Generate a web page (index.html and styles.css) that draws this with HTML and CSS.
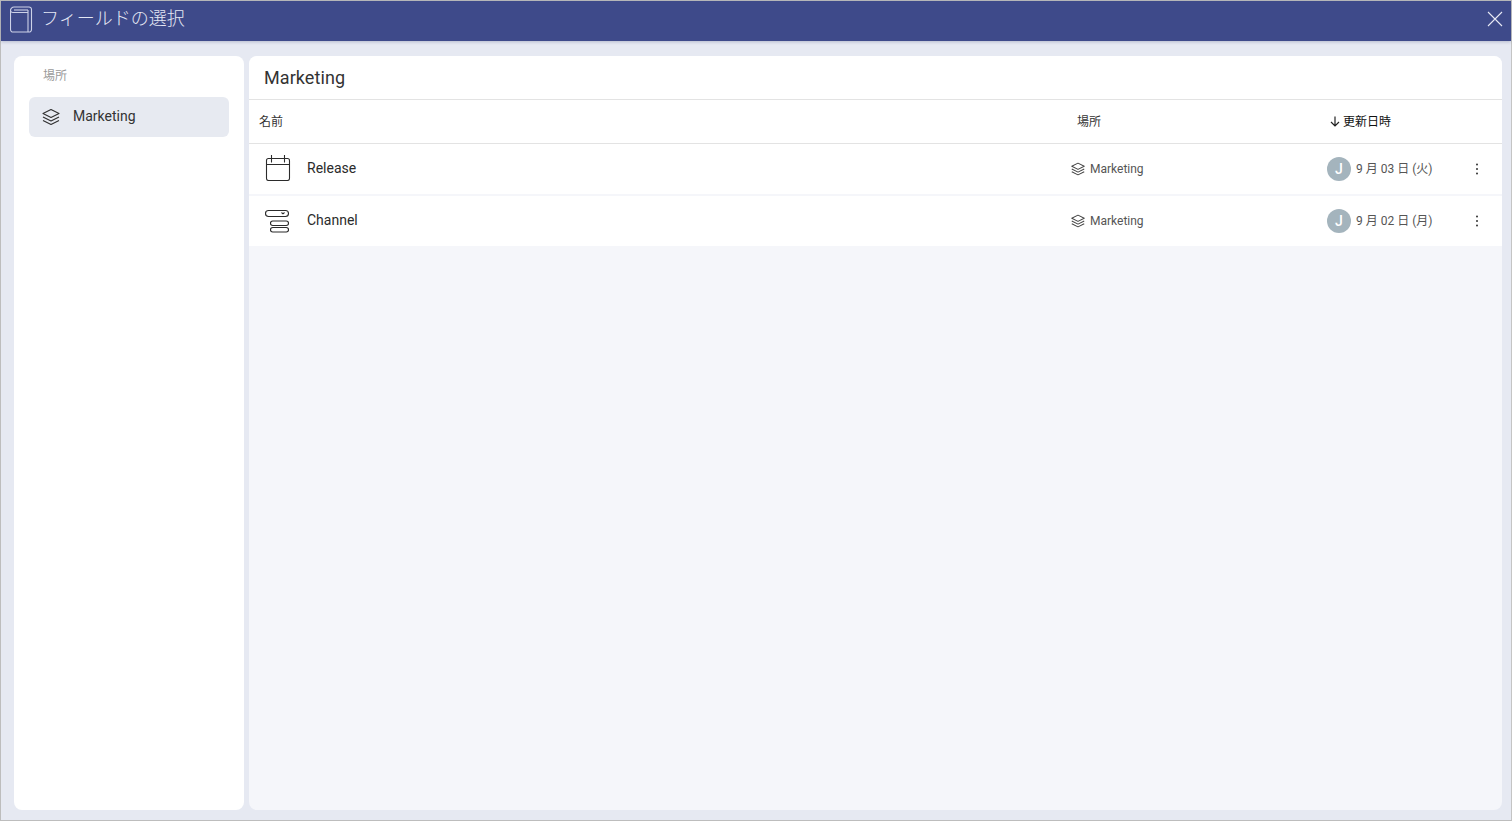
FILE: index.html
```html
<!DOCTYPE html>
<html lang="ja">
<head>
<meta charset="utf-8">
<title>フィールドの選択</title>
<link rel="stylesheet" href="styles.css">
</head>
<body>
<div class="dialog">
  <header class="titlebar">
    <svg class="book" width="23" height="27" viewBox="0 0 23 27" fill="none" stroke="#cdd2e8" stroke-width="1.1">
      <path d="M4 1h15a2.500 2.500 0 0 1 2.500 2.500v20a2.500 2.500 0 0 1-2.500 2.500H3a2.500 2.500 0 0 1-2.500-2.500V4.500A3.500 3.500 0 0 1 4 1z"/>
      <path d="M0.500 4.500A2.500 2.500 0 0 0 3 6.500h15"/>
      <path d="M4 4h14"/>
      <path d="M18 4v22"/>
    </svg>
    <h1 class="title">フィールドの選択</h1>
    <svg class="close" width="16" height="16" viewBox="0 0 16 16" stroke="#e8eaf5" stroke-width="1.1" fill="none">
      <path d="M1 1l14 14M15 1L1 15"/>
    </svg>
  </header>
  <div class="content">
    <aside class="side">
      <div class="side-label">場所</div>
      <div class="side-item">
        <svg width="18" height="18" viewBox="0 0 18 18" fill="none" stroke="#2f2f2f" stroke-width="1.1" stroke-linejoin="round">
          <path d="M9 1.500l8 4-8 4-8-4z"/>
          <path d="M1 9l8 4 8-4"/>
          <path d="M1 12.500l8 4 8-4"/>
        </svg>
        <span class="side-text">Marketing</span>
      </div>
    </aside>
    <main class="main">
      <div class="main-title">Marketing</div>
      <div class="row head">
        <div class="c-name head-name">名前</div>
        <div class="c-loc head-loc">場所</div>
        <div class="c-date head-date">
          <svg width="10" height="11" viewBox="0 0 10 11" fill="none" stroke="#222" stroke-width="1.2"><path d="M5 0.500v9.500M1 6l4 4 4-4"/></svg>
          <span>更新日時</span>
        </div>
      </div>
      <div class="row item">
        <div class="c-name">
          <svg class="type-icon" width="26" height="27" viewBox="0 0 26 27" fill="none" stroke="#2b2b2b" stroke-width="1.1">
            <rect x="1.500" y="4.500" width="23" height="22" rx="2"/>
            <path d="M1.500 10.500h23M6.500 1v7.500M19.500 1v7.500"/>
          </svg>
          <span>Release</span>
        </div>
        <div class="c-loc">
          <svg width="14" height="14" viewBox="0 0 18 18" fill="none" stroke="#444" stroke-width="1.3" stroke-linejoin="round"><path d="M9 1.500l8 4-8 4-8-4z"/><path d="M1 9l8 4 8-4"/><path d="M1 12.500l8 4 8-4"/></svg>
          <span>Marketing</span>
        </div>
        <div class="c-date">
          <span class="avatar">J</span>
          <span class="date">9 月 03 日 (火)</span>
        </div>
        <svg class="more" width="4" height="12" viewBox="0 0 4 12" fill="#333"><circle cx="2" cy="1.500" r="1"/><circle cx="2" cy="6" r="1"/><circle cx="2" cy="10.500" r="1"/></svg>
      </div>
      <div class="row item">
        <div class="c-name">
          <svg class="type-icon" width="26" height="27" viewBox="0 0 26 27" fill="none" stroke="#2b2b2b" stroke-width="1.1">
            <rect x="0.500" y="4.500" width="23" height="6" rx="3"/>
            <rect x="5.500" y="15" width="18" height="4.500" rx="2.250"/>
            <rect x="5.500" y="21.500" width="18" height="4.500" rx="2.250"/>
            <path d="M16.500 6.500l1.500 1.300 1.500-1.300"/>
          </svg>
          <span>Channel</span>
        </div>
        <div class="c-loc">
          <svg width="14" height="14" viewBox="0 0 18 18" fill="none" stroke="#444" stroke-width="1.3" stroke-linejoin="round"><path d="M9 1.500l8 4-8 4-8-4z"/><path d="M1 9l8 4 8-4"/><path d="M1 12.500l8 4 8-4"/></svg>
          <span>Marketing</span>
        </div>
        <div class="c-date">
          <span class="avatar">J</span>
          <span class="date">9 月 02 日 (月)</span>
        </div>
        <svg class="more" width="4" height="12" viewBox="0 0 4 12" fill="#333"><circle cx="2" cy="1.500" r="1"/><circle cx="2" cy="6" r="1"/><circle cx="2" cy="10.500" r="1"/></svg>
      </div>
    </main>
  </div>
</div>
</body>
</html>
```
FILE: styles.css
```css
* { box-sizing: border-box; }
html, body { margin: 0; height: 100%; }
body {
  font-family: Roboto, "Noto Sans CJK JP", sans-serif;
  color: #2b2b2b;
  overflow: hidden;
}
.dialog {
  width: 1512px;
  height: 821px;
  border: 1px solid #bdbdbd;
  border-right-color: #c4c4c4;
  background: #e6e9f2;
  display: flex;
  flex-direction: column;
}
.titlebar {
  height: 40px;
  flex: none;
  background: #3e4a8a;
  display: flex;
  align-items: center;
  padding: 0 8px 4px 9px;
  box-shadow: 0 1px 3px rgba(40, 50, 100, .25);
}
.title {
  margin: 0 0 0 8px;
  font-size: 18px;
  font-weight: 300;
  color: #e4e7f4;
  flex: 1;
  line-height: 24px;
}
.close { margin: 0; }
.content {
  flex: 1;
  display: flex;
  gap: 5px;
  padding: 15px 9px 10px 13px;
  min-height: 0;
}
.side {
  width: 230px;
  background: #fff;
  border-radius: 8px;
  padding: 12px 15px;
}
.side-label {
  font-size: 12px;
  line-height: 16px;
  color: #9a9a9a;
  padding-left: 14px;
  margin-bottom: 13px;
}
.side-item {
  height: 40px;
  background: #e7eaf1;
  border-radius: 6px;
  display: flex;
  align-items: center;
  gap: 13px;
  padding-left: 13px;
  font-size: 14px;
  color: #333;
}
.side-text { margin-top: -2px; }
.main {
  flex: 1;
  background: #f5f6fa;
  border-radius: 8px;
  overflow: hidden;
}
.main-title {
  height: 44px;
  background: #fff;
  border-bottom: 1px solid #e3e3e3;
  padding-left: 15px;
  font-size: 18px;
  letter-spacing: .08px;
  line-height: 43px;
  color: #333;
}
.row {
  display: flex;
  align-items: center;
  background: #fff;
}
.c-name { width: 812px; display: flex; align-items: center; }
.c-loc { width: 256px; display: flex; align-items: center; }
.c-date { display: flex; align-items: center; }
.head {
  height: 44px;
  border-bottom: 1px solid #e3e3e3;
  font-size: 12px;
  color: #333;
  padding-bottom: 2px;
}
.head-name { padding-left: 10px; width: 828px; }
.head-loc { width: 250px; }
.head-date { color: #111; gap: 3px; padding-left: 3px; }
.head-date svg { margin-top: 2px; }
.item {
  height: 50px;
  margin-bottom: 2px;
  font-size: 14px;
  color: #2b2b2b;
  padding-bottom: 3px;
}
.item .c-name { padding-left: 16px; }
.item .c-name .type-icon { margin-right: 16px; flex: none; }
.item .c-loc { font-size: 12px; color: #555; gap: 5px; padding-left: 10px; width: 266px; padding-top: 3px; }
.item .c-date { width: 148px; padding-top: 3px; }
.avatar {
  width: 24px;
  height: 24px;
  border-radius: 50%;
  background: #a4b4bd;
  color: #fff;
  font-size: 14px;
  font-weight: 500;
  display: flex;
  align-items: center;
  justify-content: center;
  flex: none;
}
.date { font-size: 12px; color: #555; margin-left: 5px; margin-top: -3px; white-space: nowrap; }
.more { flex: none; margin-top: 3px; }
```
